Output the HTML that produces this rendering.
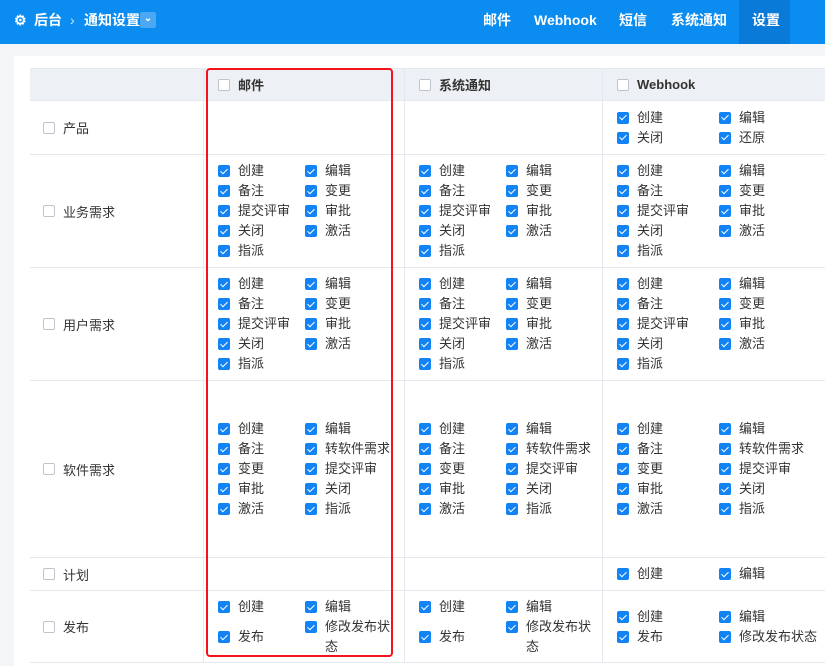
<!DOCTYPE html>
<html><head><meta charset="utf-8"><style>
*{box-sizing:border-box;margin:0;padding:0}
body{width:825px;height:657px;overflow:hidden;background:#f4f5f6;font-family:"Liberation Sans","Noto Sans CJK SC",sans-serif;font-size:13px;color:#333}
.hdr{position:absolute;left:0;top:0;width:825px;height:44px;background:#0a8cf0;color:#fff;font-weight:bold;font-size:14px}
.hdr span{position:absolute;top:0;line-height:40px}
.panel{position:absolute;left:14px;top:56px;width:820px;height:610px;background:#fff}
.row{position:absolute;left:30px;width:840px;border-bottom:1px solid #e5e8ee;display:flex}
.c{flex:none;border-right:1px solid #e5e8ee;display:flex;align-items:center;padding-left:14px}
.c0{width:174px;padding-left:13px}.c1{width:201px}.c2{width:198px}.c3{width:260px;border-right:none}
.cb{width:12px;height:12px;border:1px solid #bfc4cc;border-radius:2px;background:#fff;flex:none;margin-right:8px}
.ck{width:12px;height:12px;background:#1183f5;border-radius:2px;flex:none;margin-right:8px;margin-top:4px;position:relative}
.ck:after{content:"";position:absolute;left:4px;top:1.5px;width:3px;height:6px;border:solid #fff;border-width:0 1.5px 1.5px 0;transform:rotate(45deg)}
.w{display:flex;flex-wrap:wrap;align-items:center;width:210px}
.c1 .w,.c2 .w{width:174px}
.i{display:flex;align-items:flex-start;line-height:20px}
.c1 .i,.c2 .i{width:87px}.c3 .i{width:102px}
.i span{flex:1}
.head{background:#edf0f4;font-weight:bold}
</style></head><body>
<div class="hdr">
<span style="left:14px;font-size:14px">⚙</span><span style="left:34px">后台</span><span style="left:70px;font-weight:normal;opacity:.8">›</span><span style="left:84px">通知设置</span>
<div style="position:absolute;left:140px;top:12px;width:16px;height:16px;background:#4aa8f4;border-radius:2px;text-align:center;line-height:14px;font-size:10px">⌄</div>
<span style="left:483px">邮件</span><span style="left:534px">Webhook</span><span style="left:619px">短信</span><span style="left:671px">系统通知</span>
<div style="position:absolute;left:739px;top:0;width:51px;height:44px;background:#0a7ad8"></div><span style="left:752px">设置</span>
</div>
<div class="panel"></div>

<div class="row head" style="top:68px;height:33px;border-top:1px solid #e5e8ee">
<div class="c c0"></div>
<div class="c c1"><div class="cb"></div>邮件</div>
<div class="c c2"><div class="cb"></div>系统通知</div>
<div class="c c3"><div class="cb"></div>Webhook</div>
</div>

<div class="row" style="top:101px;height:54px">
<div class="c c0"><div class="cb"></div>产品</div><div class="c c1"></div><div class="c c2"></div>
<div class="c c3"><div class="w"><div class="i"><i class="ck"></i><span>创建</span></div><div class="i"><i class="ck"></i><span>编辑</span></div><div class="i"><i class="ck"></i><span>关闭</span></div><div class="i"><i class="ck"></i><span>还原</span></div></div></div>
</div>

<div class="row" style="top:155px;height:113px">
<div class="c c0"><div class="cb"></div>业务需求</div>
<div class="c c1"><div class="w"><div class="i"><i class="ck"></i><span>创建</span></div><div class="i"><i class="ck"></i><span>编辑</span></div><div class="i"><i class="ck"></i><span>备注</span></div><div class="i"><i class="ck"></i><span>变更</span></div><div class="i"><i class="ck"></i><span>提交评审</span></div><div class="i"><i class="ck"></i><span>审批</span></div><div class="i"><i class="ck"></i><span>关闭</span></div><div class="i"><i class="ck"></i><span>激活</span></div><div class="i"><i class="ck"></i><span>指派</span></div></div></div>
<div class="c c2"><div class="w"><div class="i"><i class="ck"></i><span>创建</span></div><div class="i"><i class="ck"></i><span>编辑</span></div><div class="i"><i class="ck"></i><span>备注</span></div><div class="i"><i class="ck"></i><span>变更</span></div><div class="i"><i class="ck"></i><span>提交评审</span></div><div class="i"><i class="ck"></i><span>审批</span></div><div class="i"><i class="ck"></i><span>关闭</span></div><div class="i"><i class="ck"></i><span>激活</span></div><div class="i"><i class="ck"></i><span>指派</span></div></div></div>
<div class="c c3"><div class="w"><div class="i"><i class="ck"></i><span>创建</span></div><div class="i"><i class="ck"></i><span>编辑</span></div><div class="i"><i class="ck"></i><span>备注</span></div><div class="i"><i class="ck"></i><span>变更</span></div><div class="i"><i class="ck"></i><span>提交评审</span></div><div class="i"><i class="ck"></i><span>审批</span></div><div class="i"><i class="ck"></i><span>关闭</span></div><div class="i"><i class="ck"></i><span>激活</span></div><div class="i"><i class="ck"></i><span>指派</span></div></div></div>
</div>

<div class="row" style="top:268px;height:113px">
<div class="c c0"><div class="cb"></div>用户需求</div>
<div class="c c1"><div class="w"><div class="i"><i class="ck"></i><span>创建</span></div><div class="i"><i class="ck"></i><span>编辑</span></div><div class="i"><i class="ck"></i><span>备注</span></div><div class="i"><i class="ck"></i><span>变更</span></div><div class="i"><i class="ck"></i><span>提交评审</span></div><div class="i"><i class="ck"></i><span>审批</span></div><div class="i"><i class="ck"></i><span>关闭</span></div><div class="i"><i class="ck"></i><span>激活</span></div><div class="i"><i class="ck"></i><span>指派</span></div></div></div>
<div class="c c2"><div class="w"><div class="i"><i class="ck"></i><span>创建</span></div><div class="i"><i class="ck"></i><span>编辑</span></div><div class="i"><i class="ck"></i><span>备注</span></div><div class="i"><i class="ck"></i><span>变更</span></div><div class="i"><i class="ck"></i><span>提交评审</span></div><div class="i"><i class="ck"></i><span>审批</span></div><div class="i"><i class="ck"></i><span>关闭</span></div><div class="i"><i class="ck"></i><span>激活</span></div><div class="i"><i class="ck"></i><span>指派</span></div></div></div>
<div class="c c3"><div class="w"><div class="i"><i class="ck"></i><span>创建</span></div><div class="i"><i class="ck"></i><span>编辑</span></div><div class="i"><i class="ck"></i><span>备注</span></div><div class="i"><i class="ck"></i><span>变更</span></div><div class="i"><i class="ck"></i><span>提交评审</span></div><div class="i"><i class="ck"></i><span>审批</span></div><div class="i"><i class="ck"></i><span>关闭</span></div><div class="i"><i class="ck"></i><span>激活</span></div><div class="i"><i class="ck"></i><span>指派</span></div></div></div>
</div>

<div class="row" style="top:381px;height:177px">
<div class="c c0"><div class="cb"></div>软件需求</div>
<div class="c c1"><div class="w"><div class="i"><i class="ck"></i><span>创建</span></div><div class="i"><i class="ck"></i><span>编辑</span></div><div class="i"><i class="ck"></i><span>备注</span></div><div class="i"><i class="ck"></i><span style="white-space:nowrap">转软件需求</span></div><div class="i"><i class="ck"></i><span>变更</span></div><div class="i"><i class="ck"></i><span>提交评审</span></div><div class="i"><i class="ck"></i><span>审批</span></div><div class="i"><i class="ck"></i><span>关闭</span></div><div class="i"><i class="ck"></i><span>激活</span></div><div class="i"><i class="ck"></i><span>指派</span></div></div></div>
<div class="c c2"><div class="w"><div class="i"><i class="ck"></i><span>创建</span></div><div class="i"><i class="ck"></i><span>编辑</span></div><div class="i"><i class="ck"></i><span>备注</span></div><div class="i"><i class="ck"></i><span style="white-space:nowrap">转软件需求</span></div><div class="i"><i class="ck"></i><span>变更</span></div><div class="i"><i class="ck"></i><span>提交评审</span></div><div class="i"><i class="ck"></i><span>审批</span></div><div class="i"><i class="ck"></i><span>关闭</span></div><div class="i"><i class="ck"></i><span>激活</span></div><div class="i"><i class="ck"></i><span>指派</span></div></div></div>
<div class="c c3"><div class="w"><div class="i"><i class="ck"></i><span>创建</span></div><div class="i"><i class="ck"></i><span>编辑</span></div><div class="i"><i class="ck"></i><span>备注</span></div><div class="i"><i class="ck"></i><span style="white-space:nowrap">转软件需求</span></div><div class="i"><i class="ck"></i><span>变更</span></div><div class="i"><i class="ck"></i><span>提交评审</span></div><div class="i"><i class="ck"></i><span>审批</span></div><div class="i"><i class="ck"></i><span>关闭</span></div><div class="i"><i class="ck"></i><span>激活</span></div><div class="i"><i class="ck"></i><span>指派</span></div></div></div>
</div>

<div class="row" style="top:558px;height:33px">
<div class="c c0"><div class="cb"></div>计划</div><div class="c c1"></div><div class="c c2"></div>
<div class="c c3"><div class="w"><div class="i"><i class="ck"></i><span>创建</span></div><div class="i"><i class="ck"></i><span>编辑</span></div></div></div>
</div>

<div class="row" style="top:591px;height:72px">
<div class="c c0"><div class="cb"></div>发布</div>
<div class="c c1" style="align-items:flex-start;padding-top:6px"><div class="w"><div class="i"><i class="ck"></i><span>创建</span></div><div class="i"><i class="ck"></i><span>编辑</span></div><div class="i"><i class="ck"></i><span>发布</span></div><div class="i"><i class="ck"></i><span>修改发布状态</span></div></div></div>
<div class="c c2" style="align-items:flex-start;padding-top:6px"><div class="w"><div class="i"><i class="ck"></i><span>创建</span></div><div class="i"><i class="ck"></i><span>编辑</span></div><div class="i"><i class="ck"></i><span>发布</span></div><div class="i"><i class="ck"></i><span>修改发布状态</span></div></div></div>
<div class="c c3" style="align-items:flex-start;padding-top:16px"><div class="w"><div class="i"><i class="ck"></i><span>创建</span></div><div class="i"><i class="ck"></i><span>编辑</span></div><div class="i"><i class="ck"></i><span>发布</span></div><div class="i"><i class="ck"></i><span style="white-space:nowrap">修改发布状态</span></div></div></div>
</div>

<div style="position:absolute;left:206px;top:68px;width:187px;height:589px;border:2px solid #f5121b;border-radius:4px"></div>
</body></html>
